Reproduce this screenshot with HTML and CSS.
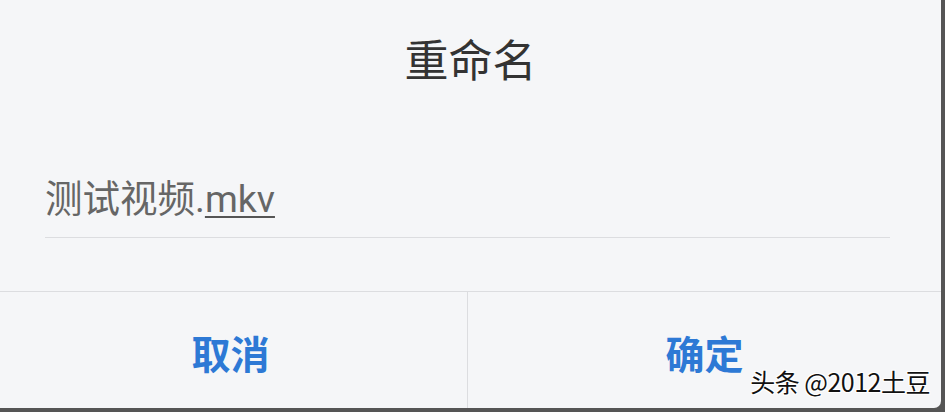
FILE: index.html
```html
<!DOCTYPE html>
<html lang="zh-CN">
<head>
<meta charset="utf-8">
<title>重命名</title>
<link rel="stylesheet" href="styles.css">
</head>
<body>
<div class="dialog">
  <div class="title">重命名</div>
  <div class="field"><span class="name">测试视频.<span class="ext">mkv</span></span></div>
  <div class="actions">
    <div class="btn btn-cancel">取消</div>
    <div class="btn">确定</div>
  </div>
  <div class="watermark">头条 @2012土豆</div>
</div>
</body>
</html>
```

FILE: styles.css
```css
html, body {
  margin: 0;
  padding: 0;
}
body {
  width: 945px;
  height: 412px;
  background: #555555;
  font-family: Roboto, "Noto Sans CJK SC", sans-serif;
  overflow: hidden;
}
.dialog {
  position: relative;
  width: 941px;
  height: 408px;
  background: #f5f6f8;
  border-bottom-right-radius: 7px;
  display: flex;
  flex-direction: column;
}
.title {
  height: 124px;
  line-height: 116px;
  text-align: center;
  font-family: "Noto Sans CJK SC", sans-serif;
  font-size: 44px;
  color: #333333;
}
.field {
  height: 97px;
  margin: 0 51px 0 45px;
  padding-bottom: 16px;
  border-bottom: 1px solid #dcdde0;
  display: flex;
  align-items: flex-end;
}
.name {
  font-size: 37.5px;
  line-height: 43px;
  color: #666666;
}
.ext {
  text-decoration: underline;
  text-decoration-thickness: 2px;
  text-underline-offset: 4px;
  text-decoration-color: #555555;
}
.actions {
  margin-top: 53px;
  border-top: 1px solid #dcdde0;
  flex: 1;
  display: grid;
  grid-template-columns: 468px 1fr;
}
.btn {
  display: flex;
  align-items: center;
  justify-content: center;
  padding-top: 4px;
  font-family: "Noto Sans CJK SC", sans-serif;
  font-weight: 700;
  font-size: 39px;
  color: #2d79d5;
}
.btn-cancel {
  padding-right: 6px;
  border-right: 1px solid #dcdde0;
}
.watermark {
  position: absolute;
  right: 11px;
  bottom: 9px;
  font-family: "Noto Sans CJK SC", sans-serif;
  font-size: 25px;
  letter-spacing: -0.5px;
  color: #111111;
  text-shadow: 1px 1px 0 #fff, -1px -1px 0 #fff, 1px -1px 0 #fff, -1px 1px 0 #fff;
}
```
